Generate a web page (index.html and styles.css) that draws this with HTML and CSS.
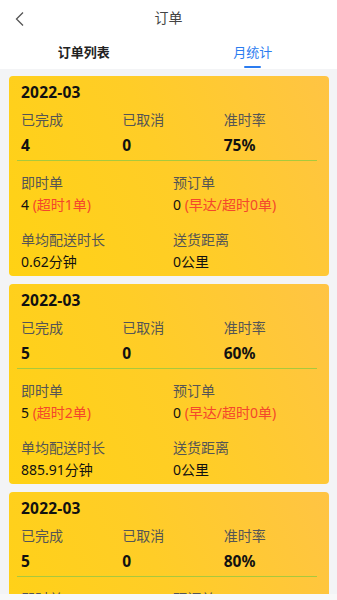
FILE: index.html
```
<!DOCTYPE html>
<html lang="zh">
<head>
<meta charset="utf-8">
<link rel="stylesheet" href="styles.css">
</head>
<body>
<div class="header">
  <div class="nav">
    <svg class="back" width="12" height="16" viewBox="0 0 12 16"><path d="M9 1.5 L2.5 8 L9 14.5" fill="none" stroke="#555" stroke-width="1.3"/></svg>
    <div class="title">订单</div>
  </div>
  <div class="tabs">
    <div class="tab">订单列表</div>
    <div class="tab active">月统计</div>
  </div>
</div>
<div class="list">
  <div class="card">
    <div class="month">2022-03</div>
    <div class="row3">
      <div class="cell"><div class="label">已完成</div><div class="big">4</div></div>
      <div class="cell"><div class="label">已取消</div><div class="big">0</div></div>
      <div class="cell"><div class="label">准时率</div><div class="big">75%</div></div>
    </div>
    <div class="divider"></div>
    <div class="row2">
      <div class="cell"><div class="label">即时单</div><div class="val">4 <span class="red">(超时1单)</span></div></div>
      <div class="cell"><div class="label">预订单</div><div class="val">0 <span class="red">(早达/超时0单)</span></div></div>
    </div>
    <div class="row2 second">
      <div class="cell"><div class="label">单均配送时长</div><div class="val">0.62分钟</div></div>
      <div class="cell"><div class="label">送货距离</div><div class="val">0公里</div></div>
    </div>
  </div>
  <div class="card">
    <div class="month">2022-03</div>
    <div class="row3">
      <div class="cell"><div class="label">已完成</div><div class="big">5</div></div>
      <div class="cell"><div class="label">已取消</div><div class="big">0</div></div>
      <div class="cell"><div class="label">准时率</div><div class="big">60%</div></div>
    </div>
    <div class="divider"></div>
    <div class="row2">
      <div class="cell"><div class="label">即时单</div><div class="val">5 <span class="red">(超时2单)</span></div></div>
      <div class="cell"><div class="label">预订单</div><div class="val">0 <span class="red">(早达/超时0单)</span></div></div>
    </div>
    <div class="row2 second">
      <div class="cell"><div class="label">单均配送时长</div><div class="val">885.91分钟</div></div>
      <div class="cell"><div class="label">送货距离</div><div class="val">0公里</div></div>
    </div>
  </div>
  <div class="card">
    <div class="month">2022-03</div>
    <div class="row3">
      <div class="cell"><div class="label">已完成</div><div class="big">5</div></div>
      <div class="cell"><div class="label">已取消</div><div class="big">0</div></div>
      <div class="cell"><div class="label">准时率</div><div class="big">80%</div></div>
    </div>
    <div class="divider"></div>
    <div class="row2">
      <div class="cell"><div class="label">即时单</div><div class="val">5 <span class="red">(超时1单)</span></div></div>
      <div class="cell"><div class="label">预订单</div><div class="val">0 <span class="red">(早达/超时0单)</span></div></div>
    </div>
    <div class="row2 second">
      <div class="cell"><div class="label">单均配送时长</div><div class="val">12.5分钟</div></div>
      <div class="cell"><div class="label">送货距离</div><div class="val">0公里</div></div>
    </div>
  </div>
</div>
<div class="bottombar"></div>
</body>
</html>
```
FILE: styles.css
```
* { box-sizing: border-box; }
html, body { margin: 0; padding: 0; }
body {
  background: #f3f4f6;
  font-family: "Noto Sans", "Noto Sans CJK SC", sans-serif;
  color: #111;
  width: 337px;
  height: 600px;
  overflow: hidden;
}
.header { background: #fff; height: 69px; }
.nav {
  height: 36px;
  display: flex;
  align-items: center;
  justify-content: center;
  position: relative;
}
.back { position: absolute; left: 14px; top: 11px; }
.title { font-size: 14px; color: #444; line-height: 20px; }
.tabs {
  height: 33px;
  display: grid;
  grid-template-columns: 1fr 1fr;
}
.tab {
  font-size: 13px;
  font-weight: 700;
  color: #222;
  text-align: center;
  line-height: 20px;
  padding-top: 6px;
  position: relative;
}
.tab:first-child { padding-right: 1px; }
.tab.active { color: #2b7cf0; font-weight: 400; }
.tab.active::after {
  content: "";
  position: absolute;
  left: 50%;
  margin-left: -9px;
  bottom: 1px;
  width: 17px;
  height: 2px;
  border-radius: 1px;
  background: #2b7cf0;
}
.list {
  padding: 7px 8px 0 9px;
  display: flex;
  flex-direction: column;
  gap: 8px;
}
.card {
  height: 200px;
  border-radius: 4px;
  background: linear-gradient(65deg, #ffd214 0%, #ffcd27 50%, #ffc444 100%);
  padding: 6px 4px 0 12px;
  flex-shrink: 0;
}
.month {
  font-size: 15.5px;
  font-weight: 700;
  line-height: 20px;
  color: #111;
  letter-spacing: 0.2px;
}
.row3 {
  display: grid;
  grid-template-columns: repeat(3, 1fr);
  margin-top: 8px;
}
.row2 {
  display: grid;
  grid-template-columns: 1fr 1fr;
  margin-top: 12px;
}
.row2.second { margin-top: 15px; }
.label { font-size: 14px; line-height: 20px; color: #555; }
.big {
  font-size: 15.5px;
  font-weight: 700;
  line-height: 20px;
  margin-top: 5px;
  color: #111;
}
.val { font-size: 14px; line-height: 20px; margin-top: 2px; color: #111; }
.red { color: #f4472b; }
.divider {
  height: 1px;
  background: #a9c93c;
  margin: 5px 8px 0 -4px;
}
.bottombar {
  position: fixed;
  left: 0;
  right: 0;
  bottom: 0;
  height: 6px;
  background: #f8f8f8;
}
```
